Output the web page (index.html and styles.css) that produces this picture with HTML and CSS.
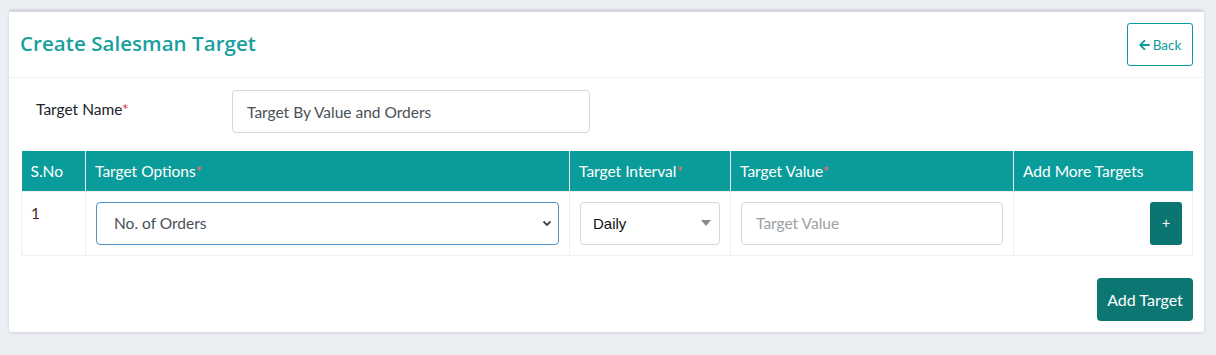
FILE: index.html
```html
<!DOCTYPE html>
<html>
<head>
<meta charset="utf-8">
<link rel="stylesheet" href="styles.css">
</head>
<body>
<div class="page">
  <div class="card">
    <div class="card-header">
      <h1 class="title">Create Salesman Target</h1>
      <button class="btn-back"><svg class="arrow" viewBox="0 0 448 512" width="11" height="12"><path fill="currentColor" d="M257.5 445.1l-22.2 22.2c-9.4 9.4-24.6 9.4-33.9 0L7 273c-9.4-9.4-9.4-24.6 0-33.9L201.4 44.7c9.4-9.4 24.6-9.4 33.9 0l22.2 22.2c9.5 9.5 9.3 25-.4 34.3L136.6 216H424c13.3 0 24 10.7 24 24v32c0 13.3-10.7 24-24 24H136.6l120.5 114.8c9.8 9.3 10 24.8.4 34.3z"/></svg>Back</button>
    </div>
    <div class="card-body">
      <div class="form-row">
        <label class="label">Target Name<span class="req">*</span></label>
        <input class="input name-input" type="text" value="Target By Value and Orders">
      </div>
      <table class="tbl">
        <thead>
          <tr>
            <th class="c-sno">S.No</th>
            <th class="c-opt">Target Options<span class="req">*</span></th>
            <th class="c-int">Target Interval<span class="req">*</span></th>
            <th class="c-val">Target Value<span class="req">*</span></th>
            <th class="c-add">Add More Targets</th>
          </tr>
        </thead>
        <tbody>
          <tr>
            <td class="sno">1</td>
            <td>
              <div class="select focused">
                <span>No. of Orders</span>
                <svg width="10" height="7" viewBox="0 0 10 7"><path d="M1.5 1.5 L5 5 L8.5 1.5" fill="none" stroke="#444" stroke-width="1.8"/></svg>
              </div>
            </td>
            <td>
              <div class="select daily">
                <span>Daily</span>
                <svg width="10" height="6" viewBox="0 0 10 6"><path d="M0 0 H10 L5 6 Z" fill="#888"/></svg>
              </div>
            </td>
            <td><input class="input val-input" type="text" placeholder="Target Value"></td>
            <td class="add-cell"><button class="btn-plus">+</button></td>
          </tr>
        </tbody>
      </table>
      <div class="actions">
        <button class="btn-submit">Add Target</button>
      </div>
    </div>
  </div>
</div>
</body>
</html>
```
FILE: styles.css
```css
html, body {
  margin: 0;
  padding: 0;
  background: #ebeef3;
}
body {
  font-family: Lato, "Open Sans", sans-serif;
  font-size: 15.5px;
  color: #212529;
}
.page {
  padding: 9px 12px 9px 9px;
}
.card {
  background: #fff;
  border-top: 3px solid #d6d9df;
  border-radius: 3px;
  box-shadow: 0 1px 3px rgba(0,0,0,0.12);
}
.card-header {
  display: flex;
  justify-content: space-between;
  align-items: flex-start;
  padding: 11px 11px 11px 11px;
  border-bottom: 1px solid #eef0f3;
}
.title {
  margin: 6px 0 0 0;
  font-family: "Open Sans", sans-serif;
  font-weight: 600;
  font-size: 20.5px;
  letter-spacing: 0.05px;
  color: #17a09d;
}
.btn-back {
  display: flex;
  align-items: center;
  gap: 3px;
  height: 43px;
  width: 66px;
  justify-content: center;
  background: #fff;
  border: 1px solid #0a9c9a;
  border-radius: 3px;
  color: #0a9c9a;
  font-family: Lato, sans-serif;
  font-size: 13.5px;
  padding: 0;
}
.arrow { margin-top: 1px; }
.card-body {
  padding: 12px 11px 11px 12px;
}
.form-row {
  display: flex;
  align-items: flex-start;
  margin-bottom: 18px;
}
.label {
  width: 196px;
  padding-left: 15px;
  padding-top: 10px;
  font-size: 15.5px;
  color: #212529;
}
.req { color: #e3342f; }
.input {
  box-sizing: border-box;
  height: 43px;
  border: 1px solid #d4d8de;
  border-radius: 4px;
  font-family: Lato, sans-serif;
  font-size: 15.5px;
  color: #495057;
  padding: 0 14px;
  outline: none;
}
.name-input { width: 358px; }
.input::placeholder { color: #9aa0a6; }
.tbl {
  width: 100%;
  border-collapse: collapse;
  table-layout: fixed;
}
.tbl th, .tbl td { box-sizing: border-box; }
.tbl th {
  background: #0a9c9a;
  color: #fff;
  font-weight: 400;
  text-align: left;
  height: 40px;
  padding: 0 9px;
  border-right: 1px solid #e9eef0;
  font-size: 15.5px;
  white-space: nowrap;
}
.tbl th:last-child { border-right: none; }
.tbl th .req { color: #f06a6a; }
.c-sno { width: 64px; }
.c-opt { width: 484px; }
.c-int { width: 161px; }
.c-val { width: 283px; }
.tbl td {
  border: 1px solid #eef0f3;
  padding: 10px 10px 10px 10px;
  vertical-align: top;
  height: 64px;
}
.tbl td.sno {
  padding-left: 9px;
  padding-top: 12px;
  color: #4a2b2b;
}
.select {
  box-sizing: border-box;
  height: 43px;
  display: flex;
  align-items: center;
  justify-content: space-between;
  border: 1px solid #d4d8de;
  border-radius: 4px;
  background: #fff;
}
.select.focused {
  border-color: #4e8fc4;
  padding: 0 6px 0 17px;
  color: #495057;
}
.select.daily {
  font-family: "Liberation Sans", Arial, sans-serif;
  font-size: 15px;
  color: #111;
  padding: 0 8px 0 12px;
}
.val-input { width: 100%; }
.add-cell { text-align: right; }
.btn-plus {
  width: 32px;
  height: 43px;
  background: #0b7571;
  border: none;
  border-radius: 3px;
  color: #fff;
  font-size: 14px;
  padding: 0;
}
.actions {
  display: flex;
  justify-content: flex-end;
  margin-top: 22px;
}
.btn-submit {
  width: 96px;
  height: 43px;
  background: #0c7672;
  border: none;
  border-radius: 4px;
  color: #fff;
  font-family: Lato, sans-serif;
  font-size: 16px;
  padding: 0;
}
```
